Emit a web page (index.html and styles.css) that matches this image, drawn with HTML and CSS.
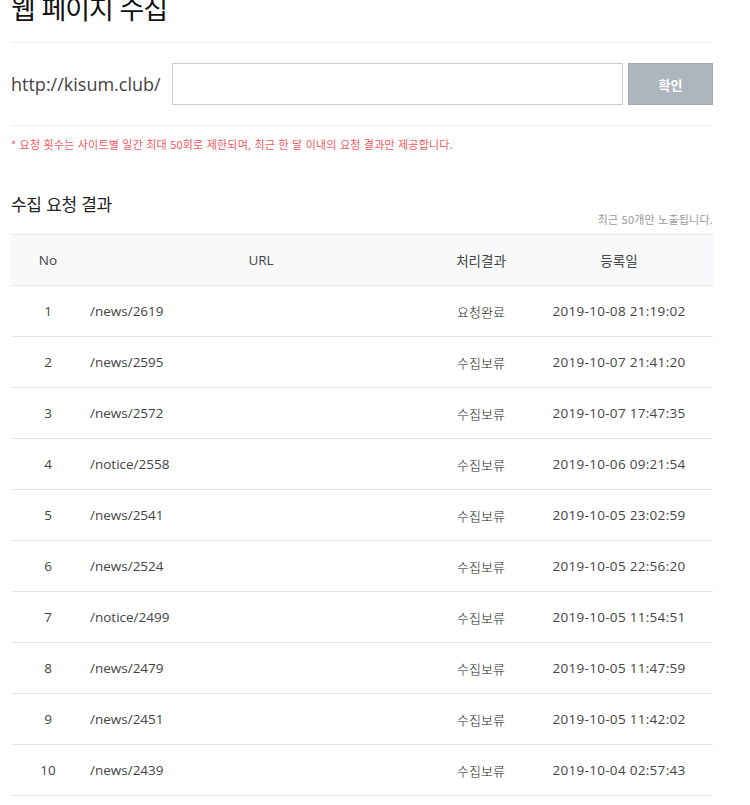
FILE: index.html
```html
<!DOCTYPE html>
<html lang="ko">
<head>
<meta charset="utf-8">
<title>웹 페이지 수집</title>
<link rel="stylesheet" href="styles.css">
</head>
<body>
<div class="wrap">
  <h1 class="title">웹 페이지 수집</h1>
  <form class="req-form">
    <label class="prefix" for="url">http://kisum.club/</label>
    <input class="url-input" id="url" type="text">
    <button class="btn" type="button">확인</button>
  </form>
  <p class="note">* 요청 횟수는 사이트별 일간 최대 50회로 제한되며, 최근 한 달 이내의 요청 결과만 제공합니다.</p>
  <div class="sec-head">
    <h2 class="sec-title">수집 요청 결과</h2>
    <span class="sec-sub">최근 50개만 노출됩니다.</span>
  </div>
  <table class="result">
    <colgroup>
      <col class="c-no"><col class="c-url"><col class="c-st"><col class="c-date">
    </colgroup>
    <thead>
      <tr><th>No</th><th>URL</th><th>처리결과</th><th>등록일</th></tr>
    </thead>
    <tbody>
      <tr><td class="no">1</td><td class="url">/news/2619</td><td class="st">요청완료</td><td class="date">2019-10-08 21:19:02</td></tr>
      <tr><td class="no">2</td><td class="url">/news/2595</td><td class="st">수집보류</td><td class="date">2019-10-07 21:41:20</td></tr>
      <tr><td class="no">3</td><td class="url">/news/2572</td><td class="st">수집보류</td><td class="date">2019-10-07 17:47:35</td></tr>
      <tr><td class="no">4</td><td class="url">/notice/2558</td><td class="st">수집보류</td><td class="date">2019-10-06 09:21:54</td></tr>
      <tr><td class="no">5</td><td class="url">/news/2541</td><td class="st">수집보류</td><td class="date">2019-10-05 23:02:59</td></tr>
      <tr><td class="no">6</td><td class="url">/news/2524</td><td class="st">수집보류</td><td class="date">2019-10-05 22:56:20</td></tr>
      <tr><td class="no">7</td><td class="url">/notice/2499</td><td class="st">수집보류</td><td class="date">2019-10-05 11:54:51</td></tr>
      <tr><td class="no">8</td><td class="url">/news/2479</td><td class="st">수집보류</td><td class="date">2019-10-05 11:47:59</td></tr>
      <tr><td class="no">9</td><td class="url">/news/2451</td><td class="st">수집보류</td><td class="date">2019-10-05 11:42:02</td></tr>
      <tr><td class="no">10</td><td class="url">/news/2439</td><td class="st">수집보류</td><td class="date">2019-10-04 02:57:43</td></tr>
    </tbody>
  </table>
</div>
</body>
</html>
```

FILE: styles.css
```css
* { box-sizing: border-box; }
html, body { margin: 0; padding: 0; background: #fff; }
body {
  font-family: "Open Sans", "Noto Sans CJK KR", sans-serif;
  color: #333;
  overflow: hidden;
}
.wrap {
  width: 702px;
  margin-left: 11px;
}
.title {
  margin: -9px 0 0 0;
  height: 52px;
  padding: 0;
  font-family: "Noto Sans CJK KR", sans-serif;
  font-size: 27px;
  font-weight: 400;
  line-height: 34px;
  letter-spacing: -1px;
  color: #111;
  border-bottom: 1px solid #eeeeee;
}
.req-form {
  display: flex;
  align-items: center;
  padding: 20px 0 20px 0;
  border-bottom: 1px solid #eeeeee;
}
.prefix {
  font-size: 18px;
  color: #444;
  width: 161px;
  white-space: nowrap;
}
.url-input {
  width: 451px;
  height: 42px;
  border: 1px solid #cccccc;
  margin: 0;
  padding: 0 10px;
  font: inherit;
  outline: none;
}
.btn {
  margin-left: 5px;
  width: 85px;
  height: 42px;
  border: 1px solid #a3acb5;
  background: #adb6bf;
  color: #fff;
  font-family: "Noto Sans CJK KR", sans-serif;
  font-size: 13px;
  font-weight: 700;
  padding: 0;
}
.note {
  margin: 10px 0 0 0;
  font-family: "Noto Sans CJK KR", sans-serif;
  font-size: 11px;
  line-height: 16px;
  letter-spacing: 0.2px;
  color: #ef5b5f;
}
.sec-head {
  display: flex;
  justify-content: space-between;
  align-items: flex-end;
  margin-top: 40px;
  padding-bottom: 7px;
}
.sec-title {
  margin: 0;
  font-family: "Noto Sans CJK KR", sans-serif;
  font-size: 17px;
  font-weight: 400;
  line-height: 24px;
  letter-spacing: -0.3px;
  color: #222;
  margin-bottom: 11px;
}
.sec-sub {
  font-family: "Noto Sans CJK KR", sans-serif;
  font-size: 11px;
  line-height: 16px;
  letter-spacing: 0.2px;
  color: #999;
}
.result {
  width: 702px;
  border-collapse: collapse;
  table-layout: fixed;
  border-top: 1px solid #e6e6e6;
  font-size: 13.5px;
}
.c-no { width: 74px; }
.c-url { width: 352px; }
.c-st { width: 88px; }
.c-date { width: 188px; }
.result th {
  height: 51px;
  background: #f8f9fa;
  font-weight: 400;
  color: #444;
  text-align: center;
  border-bottom: 1px solid #e6e6e6;
  padding: 0;
  font-family: "Open Sans", "Noto Sans CJK KR", sans-serif;
}
.result td {
  height: 51px;
  border-bottom: 1px solid #e6e6e6;
  padding: 0;
  color: #444;
  text-align: center;
}
.result td.url { text-align: left; padding-left: 5px; }
.result td.st { font-family: "Noto Sans CJK KR", sans-serif; font-weight: 300; font-size: 13px; color: #1a1a1a; }
.result td.date { letter-spacing: 0.3px; }
```
